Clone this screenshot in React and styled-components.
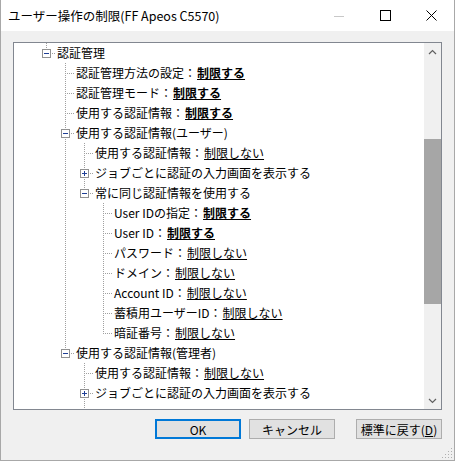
import React from "react";
import styled, { createGlobalStyle } from "styled-components";

const GlobalStyle = createGlobalStyle`
  html, body {
    margin: 0;
    padding: 0;
    background: #f0f0f0;
  }
  body {
    font-family: "Noto Sans CJK JP", "Liberation Sans", sans-serif;
    color: #000;
  }
`;

const dotsV =
  "repeating-linear-gradient(to bottom, #a0a0a0 0 1px, transparent 1px 2px)";
const dotsH =
  "repeating-linear-gradient(to right, #a0a0a0 0 1px, transparent 1px 2px)";

// "more" marks a list that carries on below the visible part of the tree
const tree = [
  {
    label: "認証管理",
    open: true,
    children: [
      { label: "認証管理方法の設定", value: "制限する", strong: true },
      { label: "認証管理モード", value: "制限する", strong: true },
      { label: "使用する認証情報", value: "制限する", strong: true },
      {
        label: "使用する認証情報(ユーザー)",
        open: true,
        children: [
          { label: "使用する認証情報", value: "制限しない" },
          { label: "ジョブごとに認証の入力画面を表示する", open: false, children: [] },
          {
            label: "常に同じ認証情報を使用する",
            open: true,
            children: [
              { label: "User IDの指定", value: "制限する", strong: true },
              { label: "User ID", value: "制限する", strong: true },
              { label: "パスワード", value: "制限しない" },
              { label: "ドメイン", value: "制限しない" },
              { label: "Account ID", value: "制限しない" },
              { label: "蓄積用ユーザーID", value: "制限しない" },
              { label: "暗証番号", value: "制限しない" },
            ],
          },
        ],
      },
      {
        label: "使用する認証情報(管理者)",
        open: true,
        more: true,
        children: [
          { label: "使用する認証情報", value: "制限しない" },
          { label: "ジョブごとに認証の入力画面を表示する", open: false, children: [] },
        ],
      },
    ],
  },
];

const flatten = (nodes, guides = [], more = false, out = []) => {
  nodes.forEach((node, i) => {
    const last = i === nodes.length - 1 && !more;
    out.push({ node, guides, last });
    if (node.open && node.children)
      flatten(node.children, [...guides, !last], node.more, out);
  });
  return out;
};

const Window = styled.div`
  width: 455px;
  height: 461px;
  box-sizing: border-box;
  border: 1px solid #a8a8a8;
  border-top: none;
  display: flex;
  flex-direction: column;
  background: #f0f0f0;
  overflow: hidden;
`;

const TitleBar = styled.div`
  height: 31px;
  flex: none;
  background: #fff;
  display: flex;
  align-items: center;
`;

const Title = styled.div`
  flex: 1;
  padding-left: 7px;
  font-size: 12.5px;
  white-space: nowrap;
`;

const CaptionButton = styled.div`
  width: 46px;
  height: 31px;
  display: flex;
  align-items: center;
  justify-content: center;
`;

const Body = styled.div`
  flex: 1;
  display: flex;
  flex-direction: column;
  padding: 11px 12px 0 12px;
`;

const TreeBox = styled.div`
  height: 368px;
  box-sizing: border-box;
  border: 1px solid #828790;
  background: #fff;
  display: flex;
`;

const TreeView = styled.div`
  flex: 1;
  overflow: hidden;
  padding-left: 23px;
`;

const Row = styled.div`
  height: 20px;
  display: flex;
  align-items: flex-start;
  white-space: nowrap;
`;

const Guide = styled.span`
  flex: none;
  width: 19px;
  height: 20px;
  background-image: ${(p) => (p.$line ? dotsV : "none")};
  background-repeat: no-repeat;
  background-position: 9px 0;
  background-size: 1px 20px;
`;

const Connector = styled.span`
  flex: none;
  width: 19px;
  height: 20px;
  display: flex;
  align-items: flex-start;
  background-image: ${dotsV}, ${dotsH};
  background-repeat: no-repeat;
  background-position: 9px 0, 9px 10px;
  background-size: 1px ${(p) => (p.$last ? "11px" : "20px")}, 10px 1px;
`;

const ExpanderIcon = styled.svg`
  margin: 6px 0 0 5px;
  display: block;
`;

const Label = styled.span`
  padding-left: 1px;
  font-size: 12px;
  line-height: 20px;
`;

const Value = styled.span`
  margin-left: 1px;
  text-decoration: underline;
  font-weight: ${(p) => (p.$strong ? 700 : 400)};
`;

const ScrollBar = styled.div`
  width: 17px;
  flex: none;
  background: #f0f0f0;
  display: flex;
  flex-direction: column;
`;

const ScrollArrow = styled.div`
  height: 17px;
  flex: none;
  display: flex;
  align-items: center;
  justify-content: center;
`;

const Track = styled.div`
  flex: 1;
`;

const Thumb = styled.div`
  margin-top: 79px;
  height: 165px;
  background: #a6a6a6;
`;

const Footer = styled.div`
  display: flex;
  justify-content: flex-end;
  padding-top: 9px;
`;

const Button = styled.div`
  width: 86px;
  height: 20px;
  box-sizing: border-box;
  margin-right: ${(p) => p.$gap || 0}px;
  background: #e1e1e1;
  border: ${(p) => (p.$default ? "2px solid #0078d7" : "1px solid #adadad")};
  font-size: 12px;
  display: flex;
  align-items: center;
  justify-content: center;
  white-space: nowrap;
`;

const GripRow = styled.div`
  margin-top: auto;
  display: flex;
  justify-content: flex-end;
  margin-right: -12px;
`;

const Expander = ({ open }) => (
  <ExpanderIcon width="9" height="9" viewBox="0 0 9 9">
    <rect x="0.5" y="0.5" width="8" height="8" fill="#fff" stroke="#919191" />
    <path d="M2 4.5h5" stroke="#1f3f96" strokeWidth="1" />
    {!open && <path d="M4.5 2v5" stroke="#1f3f96" strokeWidth="1" />}
  </ExpanderIcon>
);

const Chevron = ({ up }) => (
  <svg width="9" height="6" viewBox="0 0 9 6">
    <path
      d={up ? "M1 5L4.5 1.5L8 5" : "M1 1L4.5 4.5L8 1"}
      fill="none"
      stroke="#606060"
      strokeWidth="1.2"
    />
  </svg>
);

const Grip = () => {
  const dots = [];
  for (let r = 0; r < 4; r++) {
    for (let c = 0; c < 4; c++) {
      if (r + c >= 3)
        dots.push(
          <rect key={`${r}-${c}`} x={c * 3 + 1} y={r * 3 + 1} width="1" height="1" fill="#b0b0b0" />
        );
    }
  }
  return (
    <svg width="13" height="13" viewBox="0 0 13 13">
      {dots}
    </svg>
  );
};

const App = () => {
  const rows = flatten(tree);
  const tail = rows[rows.length - 1];
  return (
    <Window>
      <GlobalStyle />
      <TitleBar>
        <Title>ユーザー操作の制限(FF Apeos C5570)</Title>
        <CaptionButton>
          <svg width="10" height="10" viewBox="0 0 10 10">
            <path d="M0 5.5h10" stroke="#c8c8c8" />
          </svg>
        </CaptionButton>
        <CaptionButton>
          <svg width="11" height="11" viewBox="0 0 11 11">
            <rect x="0.5" y="0.5" width="10" height="10" fill="none" stroke="#000" />
          </svg>
        </CaptionButton>
        <CaptionButton>
          <svg width="11" height="11" viewBox="0 0 11 11">
            <path d="M0.5 0.5L10.5 10.5M10.5 0.5L0.5 10.5" stroke="#000" />
          </svg>
        </CaptionButton>
      </TitleBar>
      <Body>
        <TreeBox>
          <TreeView>
            {rows.map(({ node, guides, last }, i) => (
              <Row key={i}>
                {guides.map((g, j) => (
                  <Guide key={j} $line={g} />
                ))}
                <Connector $last={last}>
                  {node.children && <Expander open={node.open} />}
                </Connector>
                <Label>
                  {node.label}
                  {node.value && (
                    <>
                      ：<Value $strong={node.strong}>{node.value}</Value>
                    </>
                  )}
                </Label>
              </Row>
            ))}
            <Row>
              {[...tail.guides, !tail.last].map((g, j) => (
                <Guide key={j} $line={g} />
              ))}
            </Row>
          </TreeView>
          <ScrollBar>
            <ScrollArrow>
              <Chevron up />
            </ScrollArrow>
            <Track>
              <Thumb />
            </Track>
            <ScrollArrow>
              <Chevron />
            </ScrollArrow>
          </ScrollBar>
        </TreeBox>
        <Footer>
          <Button $default $gap={8}>OK</Button>
          <Button $gap={21}>キャンセル</Button>
          <Button>
            標準に戻す(<u>D</u>)
          </Button>
        </Footer>
        <GripRow>
          <Grip />
        </GripRow>
      </Body>
    </Window>
  );
};

export default App;
